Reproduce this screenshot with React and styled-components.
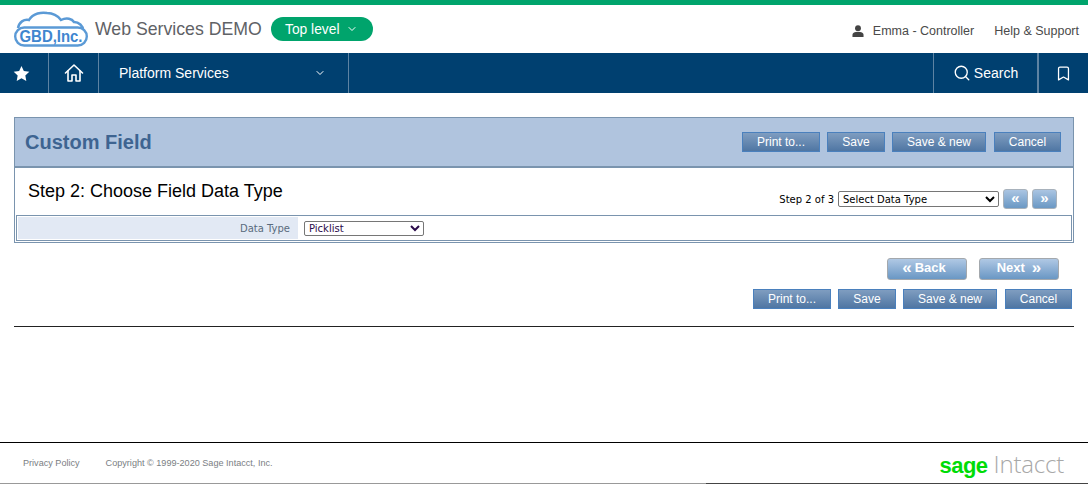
import React from 'react'
import styled, { createGlobalStyle } from 'styled-components'
import { ChevronDown, Search, Bookmark } from 'lucide-react'

const GlobalStyle = createGlobalStyle`
  html, body {
    margin: 0;
    padding: 0;
    background: #fff;
    font-family: 'Liberation Sans', Arial, sans-serif;
  }
`

const Page = styled.div`
  width: 1088px;
  height: 484px;
  display: flex;
  flex-direction: column;
  overflow: hidden;
`

const TopBar = styled.header`
  height: 48px;
  border-top: 5px solid #00a46c;
  display: flex;
  align-items: center;
  padding: 0 9px 0 14px;
`

const LogoBox = styled.div`
  width: 74px;
  height: 36px;
  margin-right: 7px;
`

const AppName = styled.div`
  font-size: 17.7px;
  color: #5f6266;
  margin-right: 9px;
`

const LevelPill = styled.div`
  width: 102px;
  height: 24px;
  border-radius: 12px;
  background: #00a46c;
  color: #fff;
  font-size: 13.8px;
  display: flex;
  align-items: center;
  justify-content: center;
  gap: 7px;
`

const UserLinks = styled.div`
  margin: 4px 0 0 auto;
  display: flex;
  align-items: center;
  font-size: 12.5px;
  color: #4a4a4a;
`

const UserName = styled.span`
  margin: 0 20px 0 9px;
`

const NavBar = styled.nav`
  height: 40px;
  background: #004070;
  display: flex;
  color: #fff;
  font-size: 14px;
`

const NavItem = styled.div`
  width: ${p => p.$w}px;
  box-sizing: border-box;
  display: flex;
  align-items: center;
  justify-content: center;
  padding-right: ${p => p.$pr || 0}px;
  border-right: ${p => p.$noRight ? 'none' : '1px solid #5d83a3'};
  border-left: ${p => p.$left ? '1px solid #5d83a3' : 'none'};
  gap: 3px;
`

const NavMenu = styled(NavItem)`
  justify-content: space-between;
  padding: 0 22px 0 20px;
`

const NavSpacer = styled.div`
  flex: 1;
`

const Content = styled.main`
  flex: 1;
  padding: 24px 14px 0;
  display: flex;
  flex-direction: column;
`

const Panel = styled.section`
  border: 1px solid #7a94ae;
  height: 126px;
  box-sizing: border-box;
`

const PanelHead = styled.div`
  height: 48px;
  background: #b0c4de;
  border-bottom: 2px solid #7a94ae;
  display: flex;
  align-items: center;
  justify-content: space-between;
  padding: 0 12px 0 10px;
`

const PanelTitle = styled.h1`
  margin: 0;
  font-size: 20px;
  font-weight: bold;
  color: #3e6491;
`

const ButtonRow = styled.div`
  display: flex;
  gap: 7px;
`

const ActionButton = styled.button`
  height: 20px;
  width: ${p => p.$w}px;
  margin-left: ${p => p.$ml || 0}px;
  padding: 0;
  border: 1px solid #4a80bd;
  background: linear-gradient(#7f9dc0, #4f76a3);
  color: #fff;
  font-family: 'Liberation Sans', Arial, sans-serif;
  font-size: 12px;
`

const StepRow = styled.div`
  height: 47px;
  display: flex;
  justify-content: space-between;
  padding: 0 16px 0 13px;
`

const StepTitle = styled.h2`
  margin: 13px 0 0;
  font-size: 18px;
  font-weight: normal;
  color: #000;
  line-height: 20px;
`

const StepNav = styled.div`
  display: flex;
  align-items: center;
  align-self: flex-start;
  margin-top: 21px;
  font-family: 'DejaVu Sans', sans-serif;
  font-size: 10px;
  color: #000;
`

const Select = styled.select`
  width: ${p => p.$w}px;
  height: ${p => p.$h}px;
  margin-left: ${p => p.$ml || 0}px;
  padding: 0;
  border: 1px solid #767676;
  border-radius: 2px;
  background: #fff;
  color: ${p => p.$color || '#000'};
  font-family: 'DejaVu Sans', sans-serif;
  font-size: 10px;
`

const ArrowButton = styled.button`
  width: 25px;
  height: 20px;
  margin-left: 4px;
  padding: 0 0 3px;
  border: 1px solid #a8b2bc;
  border-radius: 3px;
  background: linear-gradient(#aac5e2, #6a98c4);
  color: #fff;
  font-family: 'Liberation Sans', Arial, sans-serif;
  font-weight: bold;
  font-size: 15px;
  line-height: 14px;
`

const FieldRow = styled.div`
  height: 26px;
  margin: 0 1px;
  box-sizing: border-box;
  border: 1px solid #7a94ae;
  padding: 1px;
  display: flex;
`

const FieldLabel = styled.div`
  width: 280px;
  box-sizing: border-box;
  background: #e2e9f4;
  font-family: 'DejaVu Sans', sans-serif;
  font-size: 10px;
  color: #5a6b7d;
  display: flex;
  align-items: center;
  justify-content: flex-end;
  padding-right: 8px;
`

const FieldValue = styled.div`
  flex: 1;
  display: flex;
  align-items: center;
  padding-left: 6px;
`

const PagerRow = styled.div`
  display: flex;
  justify-content: flex-end;
  gap: 12px;
  margin-top: 15px;
  padding-right: 15px;
`

const PagerButton = styled.button`
  width: 80px;
  height: 22px;
  padding: 0 ${p => p.$pr || 0}px 3px 0;
  border: 1px solid #a3a8ad;
  border-radius: 3px;
  background: linear-gradient(#b0c8e4, #6a97c4);
  color: #fff;
  font-family: 'Liberation Sans', Arial, sans-serif;
  font-weight: bold;
  font-size: 13px;
  display: flex;
  align-items: center;
  justify-content: center;
  gap: ${p => p.$gap}px;
`

const Guillemet = styled.span`
  font-size: 17px;
  line-height: 17px;
`

const BottomButtons = styled(ButtonRow)`
  justify-content: flex-end;
  margin-top: 9px;
  padding-right: 2px;
`

const Rule = styled.hr`
  margin: 17px 0 0;
  border: 0;
  border-top: 1px solid #222;
  width: 1060px;
`

const Footer = styled.footer`
  margin-top: auto;
  height: 40px;
  border-top: 1px solid #000;
  display: flex;
  align-items: center;
  padding: 0 23px;
  font-family: 'Liberation Sans', Arial, sans-serif;
  font-size: 9.1px;
  color: #7a7e83;
`

const FooterEdge = styled.div`
  height: 1px;
  background: linear-gradient(to right, #999 706px, #444 706px);
`

const FooterLink = styled.span`
  margin-right: 26px;
`

const Brand = styled.div`
  margin-left: auto;
  margin-right: 1px;
  display: flex;
  align-items: baseline;
  gap: 6px;
`

const BrandSage = styled.span`
  color: #00dc06;
  font-family: 'Liberation Sans', Arial, sans-serif;
  font-size: 22px;
  font-weight: 700;
  letter-spacing: -0.5px;
`

const BrandIntacct = styled.span`
  color: #a8a8a8;
  font-family: 'Open Sans', sans-serif;
  font-size: 24px;
  font-weight: 300;
  letter-spacing: -0.2px;
`

const Logo = () => (
  <svg width="74" height="36" viewBox="0 0 74 36">
    <path d="M4 17C5 11 10 8 15 9C19 2 28 1 33 2C39 2 44 5 47 9C53 6 58 8 60 11C65 11 69 15 69 19" fill="none" stroke="#5b9ad6" strokeWidth="2.5" />
    <rect x="1.2" y="16.5" width="71.6" height="18" rx="9" fill="#fff" stroke="#5b9ad6" strokeWidth="2.4" />
    <text x="5.5" y="31" fontFamily="Liberation Sans, Arial, sans-serif" fontWeight="bold" fontSize="16" fill="#3f86cf" textLength="63" lengthAdjust="spacingAndGlyphs">GBD,Inc.</text>
  </svg>
)

const StarIcon = () => (
  <svg width="17" height="17" viewBox="0 0 24 24" fill="#fff">
    <path d="M12 1.5l3.3 7 7.7 1-5.6 5.3 1.4 7.7-6.8-3.8-6.8 3.8 1.4-7.7L1 9.5l7.7-1z" />
  </svg>
)

const HomeIcon = () => (
  <svg width="20" height="20" viewBox="0 0 20 20" fill="none" stroke="#fff" strokeWidth="1.6" strokeLinejoin="round" strokeLinecap="round">
    <path d="M1.5 10L10 2l8.5 8" />
    <path d="M4 8v10h4v-6h4v6h4V8" />
  </svg>
)

const UserIcon = () => (
  <svg width="12" height="12" viewBox="0 0 13 13" fill="#444">
    <circle cx="6.5" cy="3.4" r="3.2" />
    <path d="M0.5 13V10.6C0.5 8.6 3 7.4 6.5 7.4S12.5 8.6 12.5 10.6V13z" />
  </svg>
)

const Actions = () => (
  <>
    <ActionButton $w={78}>Print to...</ActionButton>
    <ActionButton $w={58}>Save</ActionButton>
    <ActionButton $w={94}>Save &amp; new</ActionButton>
    <ActionButton $w={67} $ml={1}>Cancel</ActionButton>
  </>
)

export default function App() {
  return (
    <Page>
      <GlobalStyle />
      <TopBar>
        <LogoBox><Logo /></LogoBox>
        <AppName>Web Services DEMO</AppName>
        <LevelPill>Top level <ChevronDown size={12} strokeWidth={2} /></LevelPill>
        <UserLinks>
          <UserIcon />
          <UserName>Emma - Controller</UserName>
          Help &amp; Support
        </UserLinks>
      </TopBar>
      <NavBar>
        <NavItem $w={49} $pr={5}><StarIcon /></NavItem>
        <NavItem $w={50}><HomeIcon /></NavItem>
        <NavMenu $w={250}>Platform Services <ChevronDown size={12} strokeWidth={2} /></NavMenu>
        <NavSpacer />
        <NavItem $w={105} $left><Search size={18} strokeWidth={1.8} /> Search</NavItem>
        <NavItem $w={50} $left $noRight><Bookmark size={17} strokeWidth={1.8} /></NavItem>
      </NavBar>
      <Content>
        <Panel>
          <PanelHead>
            <PanelTitle>Custom Field</PanelTitle>
            <ButtonRow><Actions /></ButtonRow>
          </PanelHead>
          <StepRow>
            <StepTitle>Step 2: Choose Field Data Type</StepTitle>
            <StepNav>
              Step 2 of 3
              <Select $w={161} $h={16} $ml={4} defaultValue="Select Data Type">
                <option>Select Data Type</option>
              </Select>
              <ArrowButton>«</ArrowButton>
              <ArrowButton>»</ArrowButton>
            </StepNav>
          </StepRow>
          <FieldRow>
            <FieldLabel>Data Type</FieldLabel>
            <FieldValue>
              <Select $w={120} $h={15} $color="#2a0a4a" defaultValue="Picklist">
                <option>Picklist</option>
              </Select>
            </FieldValue>
          </FieldRow>
        </Panel>
        <PagerRow>
          <PagerButton $gap={3} $pr={6}><Guillemet>«</Guillemet>Back</PagerButton>
          <PagerButton $gap={7}>Next<Guillemet>»</Guillemet></PagerButton>
        </PagerRow>
        <BottomButtons><Actions /></BottomButtons>
        <Rule />
      </Content>
      <Footer>
        <FooterLink>Privacy Policy</FooterLink>
        <span>Copyright © 1999-2020 Sage Intacct, Inc.</span>
        <Brand><BrandSage>sage</BrandSage><BrandIntacct>Intacct</BrandIntacct></Brand>
      </Footer>
      <FooterEdge />
    </Page>
  )
}
